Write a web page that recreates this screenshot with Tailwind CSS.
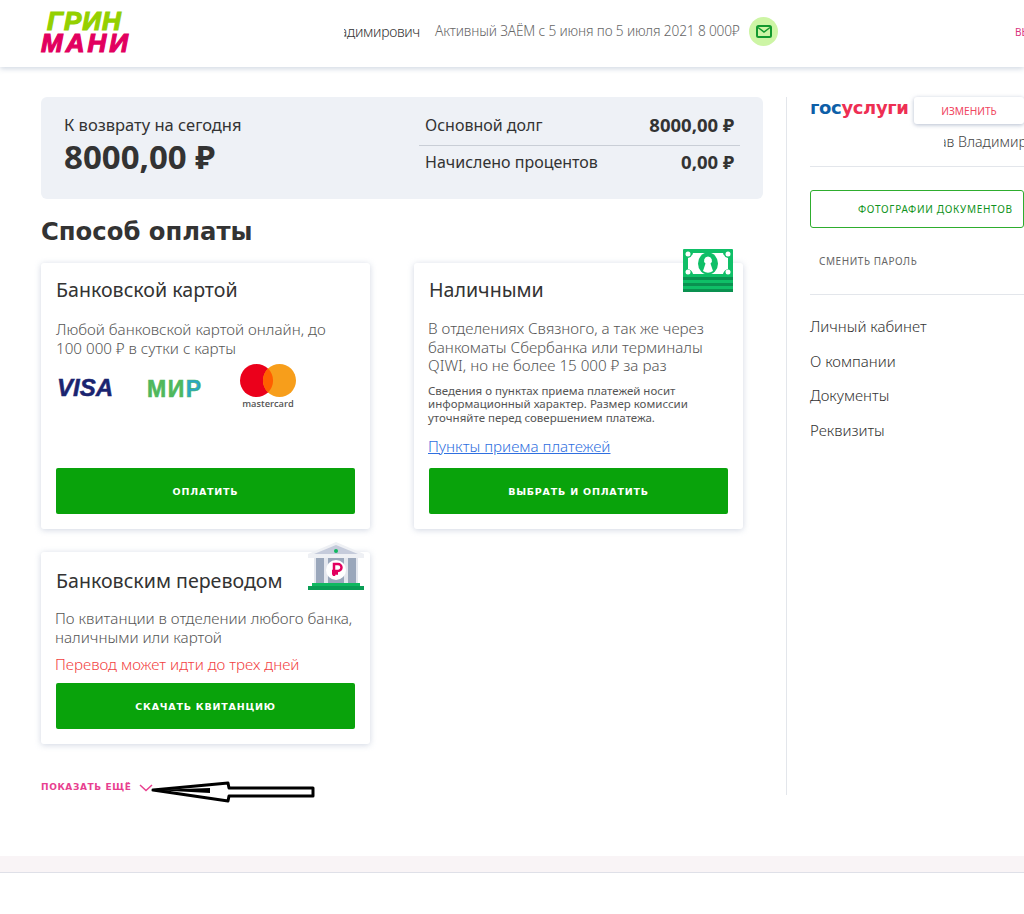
<!DOCTYPE html>
<html lang="ru">
<head>
    <meta charset="UTF-8">
    <title>Грин Мани</title>
    <script src="https://cdn.jsdelivr.net/npm/@tailwindcss/browser@4"></script>
</head>
<body class="relative w-[1024px] h-[914px] overflow-hidden bg-white text-[#333] font-['Noto_Sans',sans-serif]">
    <!-- header -->
    <header class="h-[67px] pb-[4px] flex items-center bg-white shadow-[0_2px_5px_rgba(160,175,195,0.45)] relative">
        <a class="block ml-[41px] w-[90px] font-['Liberation_Sans',sans-serif] font-bold italic text-[26px] leading-[22px] [-webkit-text-stroke:1.2px_currentColor]">
            <span class="block pl-[6px] tracking-[1px] text-[#94d000]">ГРИН</span>
            <span class="block tracking-[3px] text-[#e2005f]">МАНИ</span>
        </a>
        <div class="ml-[213px] w-[76px] flex justify-end overflow-hidden text-[14px] font-light tracking-[-0.3px] whitespace-nowrap text-[#333]"><span class="shrink-0">Владимирович</span></div>
        <div class="ml-[15px] w-[305px] text-[13.700px] font-light tracking-[-0.15px] whitespace-nowrap text-[#666]">Активный ЗАЁМ с 5 июня по 5 июля 2021 8 000₽</div>
        <div class="ml-[9px] w-[29px] h-[29px] rounded-full bg-[#cdf5a5] flex items-center justify-center">
            <svg width="16" height="13" viewBox="0 0 16 13" fill="none" stroke="#12992f" stroke-width="2"><rect x="1" y="1" width="14" height="11" rx="1.5"/><path d="M2 2.5 8 7l6-4.500" stroke-width="1.500"/></svg>
        </div>
        <div class="absolute left-[1015px] top-[25px] text-[10px] text-[#d9327f] whitespace-nowrap">ВЫЙТИ</div>
    </header>

    <div class="flex pl-[41px] pt-[30px]">
        <!-- main column -->
        <main class="w-[722px] shrink-0">
            <section class="h-[102px] rounded-md bg-[#eef1f6] flex pl-[23px] pr-[23px]">
                <div class="w-[355px] pt-[18px]">
                    <div class="text-[16.500px] leading-[20px]">К возврату на сегодня</div>
                    <div class="mt-[6px] text-[33px] leading-[32px] font-bold">8000,00 ₽</div>
                </div>
                <div class="w-[321px] pt-[10px] text-[16px]">
                    <div class="h-[39px] pb-[2px] px-[6px] flex items-center justify-between border-b border-[#c9ced6]"><span>Основной долг</span><b class="font-bold text-[18.500px]">8000,00 ₽</b></div>
                    <div class="h-[35px] pb-[3px] px-[6px] flex items-center justify-between"><span>Начислено процентов</span><b class="font-bold text-[18.500px]">0,00 ₽</b></div>
                </div>
            </section>

            <h1 class="mt-[16px] font-['DejaVu_Sans',sans-serif] text-[24.300px] leading-[34px] font-bold">Способ оплаты</h1>

            <div class="mt-[14px] grid grid-cols-[329px_330px] gap-x-[43px] gap-y-[23px]">
                <article class="h-[266px] px-[15px] pt-[14px] pb-[15px] flex flex-col rounded-[3px] bg-white shadow-[0_1px_6px_rgba(150,165,190,0.45)]">
                    <h2 class="text-[19.600px] leading-[26px] font-normal">Банковской картой</h2>
                    <p class="mt-[17px] text-[15.200px] leading-[19px] font-light text-[#555] whitespace-nowrap">Любой банковской картой онлайн, до<br>100 000 ₽ в сутки с карты</p>
                    <div class="mt-[6px] flex items-start h-[50px]">
                        <span class="mt-[11px] ml-[1px] w-[90px] font-['Liberation_Sans',sans-serif] text-[24px] leading-[26px] font-bold italic text-[#1a2470] [-webkit-text-stroke:0.5px_#1a2470]">VISA</span>
                        <span class="mt-[13px] w-[92px] font-['Liberation_Sans',sans-serif] text-[23px] leading-[24px] font-bold tracking-[1.500px] text-[#4fb85c] [-webkit-text-stroke:0.6px_#4fb85c]">МИ<span class="text-[#2aa6c9]">Р</span></span>
                        <div class="w-[58px] flex flex-col items-center">
                            <svg width="56" height="33" viewBox="0 0 56 33"><circle cx="16.500" cy="16.500" r="16.500" fill="#eb001b"/><circle cx="39.500" cy="16.500" r="16.500" fill="#f79e1b"/><path d="M28 4.600a16.500 16.500 0 0 1 0 23.800 16.500 16.500 0 0 1 0-23.800z" fill="#ff5f00"/></svg>
                            <span class="mt-[1px] font-['Open_Sans',sans-serif] text-[9.300px] leading-[12px] font-semibold text-[#555]">mastercard</span>
                        </div>
                    </div>
                    <a class="mt-auto h-[46px] pt-[2px] rounded-[2px] bg-[#09a30b] flex items-center justify-center font-['DejaVu_Sans',sans-serif] text-[9.500px] font-bold tracking-[0.8px] text-white">ОПЛАТИТЬ</a>
                </article>

                <article class="relative ml-[1px] w-[329px] h-[266px] px-[15px] pt-[14px] flex flex-col rounded-[3px] bg-white shadow-[0_1px_6px_rgba(150,165,190,0.45)]">
                    <svg class="absolute left-[269px] -top-[14px]" width="50" height="43" viewBox="0 0 50 43">
                        <rect width="50" height="43" rx="1" fill="#0fbf67"/>
                        <path d="M10 4h30q1 4 5 5v11q-4 1-5 5H10q-1-4-5-5V9q4-1 5-5z" fill="#fff"/>
                        <ellipse cx="25" cy="14.500" rx="10" ry="11" fill="#0fbf67"/>
                        <path d="M25 7.500a4 4 0 0 1 2.500 7.100L30 22q-5 3.500-10 0l2.500-7.400A4 4 0 0 1 25 7.500z" fill="#fff"/>
                        <circle cx="5" cy="5" r="2.500" fill="#fff"/><circle cx="45" cy="5" r="2.500" fill="#fff"/><circle cx="5" cy="23" r="2.500" fill="#fff"/><circle cx="45" cy="23" r="2.500" fill="#fff"/>
                        <path d="M0 28h50v3H0zM0 34h50v3H0zM0 40h50v3H0z" fill="#0a9150"/>
                    </svg>
                    <h2 class="text-[19.600px] leading-[26px] font-normal">Наличными</h2>
                    <p class="mt-[16px] -ml-[1px] text-[15.200px] leading-[18.500px] font-light text-[#555] whitespace-nowrap">В отделениях Связного, а так же через<br>банкоматы Сбербанка или терминалы<br>QIWI, но не более 15 000 ₽ за раз</p>
                    <p class="mt-[9px] -ml-[1px] text-[11.500px] leading-[13.500px] text-[#555] whitespace-nowrap">Сведения о пунктах приема платежей носит<br>информационный характер. Размер комиссии<br>уточняйте перед совершением платежа.</p>
                    <a class="mt-[12px] -ml-[1px] text-[15.200px] leading-[20px] font-light text-[#2f6fe0] underline">Пункты приема платежей</a>
                    <a class="absolute left-[15px] right-[15px] bottom-[15px] h-[46px] pt-[2px] rounded-[2px] bg-[#09a30b] flex items-center justify-center font-['DejaVu_Sans',sans-serif] text-[9.500px] font-bold tracking-[0.8px] text-white">ВЫБРАТЬ И ОПЛАТИТЬ</a>
                </article>

                <article class="relative h-[192px] px-[15px] pt-[16px] pb-[15px] flex flex-col rounded-[3px] bg-white shadow-[0_1px_6px_rgba(150,165,190,0.45)]">
                    <svg class="absolute left-[267px] -top-[10px]" width="56" height="48" viewBox="0 0 56 48">
                        <path d="M0 12 28 0l28 12v4H0z" fill="#eef0f4"/><path d="M6 12 28 3l22 9z" fill="#c5cbdb"/><circle cx="28" cy="9" r="2" fill="#10b860"/>
                        <path d="M6 16h44v25H6z" fill="#e4e7ee"/><path d="M8 16h8v25H8zM40 16h8v25h-8zM20 16h16v25H20z" fill="#9aa7bb"/>
                        <circle cx="28" cy="28" r="10" fill="#fff"/>
                        <path d="M26 34V22h4a3.500 3.500 0 0 1 0 7h-6m0 2.500h6" fill="none" stroke="#e2005f" stroke-width="2.500"/>
                        <path d="M4 41h48v3H4z" fill="#10b860"/><path d="M0 44h56v4H0z" fill="#0a9d55"/>
                    </svg>
                    <h2 class="text-[19.600px] leading-[26px] font-normal">Банковским переводом</h2>
                    <p class="mt-[15px] -ml-[1px] text-[15.200px] leading-[19px] font-light text-[#555] whitespace-nowrap">По квитанции в отделении любого банка,<br>наличными или картой</p>
                    <p class="mt-[8px] -ml-[1px] text-[15.200px] leading-[19px] font-light text-[#f24141] whitespace-nowrap">Перевод может идти до трех дней</p>
                    <a class="mt-auto h-[46px] pt-[2px] rounded-[2px] bg-[#09a30b] flex items-center justify-center font-['DejaVu_Sans',sans-serif] text-[9.500px] font-bold tracking-[0.8px] text-white">СКАЧАТЬ КВИТАНЦИЮ</a>
                </article>
            </div>

            <a class="mt-[37px] flex items-center font-['DejaVu_Sans',sans-serif] text-[9px] font-bold tracking-[0.6px] text-[#e8408f]">
                ПОКАЗАТЬ ЕЩЁ
                <svg class="ml-[8px]" width="14" height="8" viewBox="0 0 14 8" fill="none" stroke="#e8408f" stroke-width="1.500"><path d="m1 1 6 5.500L13 1"/></svg>
            </a>
        </main>

        <div class="ml-[23px] h-[698px] border-l border-[#e3e6eb]"></div>

        <!-- sidebar -->
        <aside class="ml-[23px] w-[214px] shrink-0 text-[#333]">
            <div class="flex items-start">
                <span class="w-[104px] mt-[-1px] font-['DejaVu_Sans',sans-serif] font-bold text-[18px] leading-[24px] tracking-[-0.35px] whitespace-nowrap"><span class="text-[#0d5fa8]">гос</span><span class="text-[#ee2f53]">услуги</span></span>
                <a class="w-[110px] h-[27px] pt-[2px] shrink-0 rounded-[3px] bg-white shadow-[0_1px_4px_rgba(130,145,175,0.6)] flex items-center justify-center text-[10.200px] text-[#f0465f]">ИЗМЕНИТЬ</a>
            </div>
            <div class="mt-[9px] ml-[134px] overflow-hidden text-[14.200px] leading-[18px] font-light whitespace-nowrap text-[#444]"><span class="block -ml-[5px]">ав Владимирович</span></div>
            <div class="mt-[15px] border-t border-[#e3e6eb]"></div>
            <a class="mt-[23px] h-[38px] pt-[1px] flex items-center pl-[47px] rounded-[3px] border border-[#2ead2e] text-[10px] tracking-[0.7px] text-[#0f9320] whitespace-nowrap">ФОТОГРАФИИ ДОКУМЕНТОВ</a>
            <a class="block mt-[26px] ml-[9px] text-[10px] leading-[14px] tracking-[0.55px] text-[#666]">СМЕНИТЬ ПАРОЛЬ</a>
            <div class="mt-[26px] border-t border-[#e3e6eb]"></div>
            <nav class="mt-[21px] flex flex-col gap-[14.500px] text-[15px] leading-[20px] font-light">
                <a>Личный кабинет</a>
                <a>О компании</a>
                <a>Документы</a>
                <a>Реквизиты</a>
            </nav>
        </aside>
    </div>

    <!-- hand-drawn arrow over the page -->
    <svg class="absolute left-[150px] top-[780px]" width="166" height="24" viewBox="0 0 166 24">
        <path d="M3 10 78 3l1 5h84v8H79l-1 5z" fill="#fff" stroke="#000" stroke-width="3" stroke-linejoin="round"/>
        <path d="M3 10 60 8v5z" fill="#000"/>
    </svg>

    <!-- footer -->
    <footer class="absolute left-0 right-0 top-[856px] h-[17px] bg-[#f9f4f6] border-b border-[#dfe0e8]"></footer>
</body>
</html>
